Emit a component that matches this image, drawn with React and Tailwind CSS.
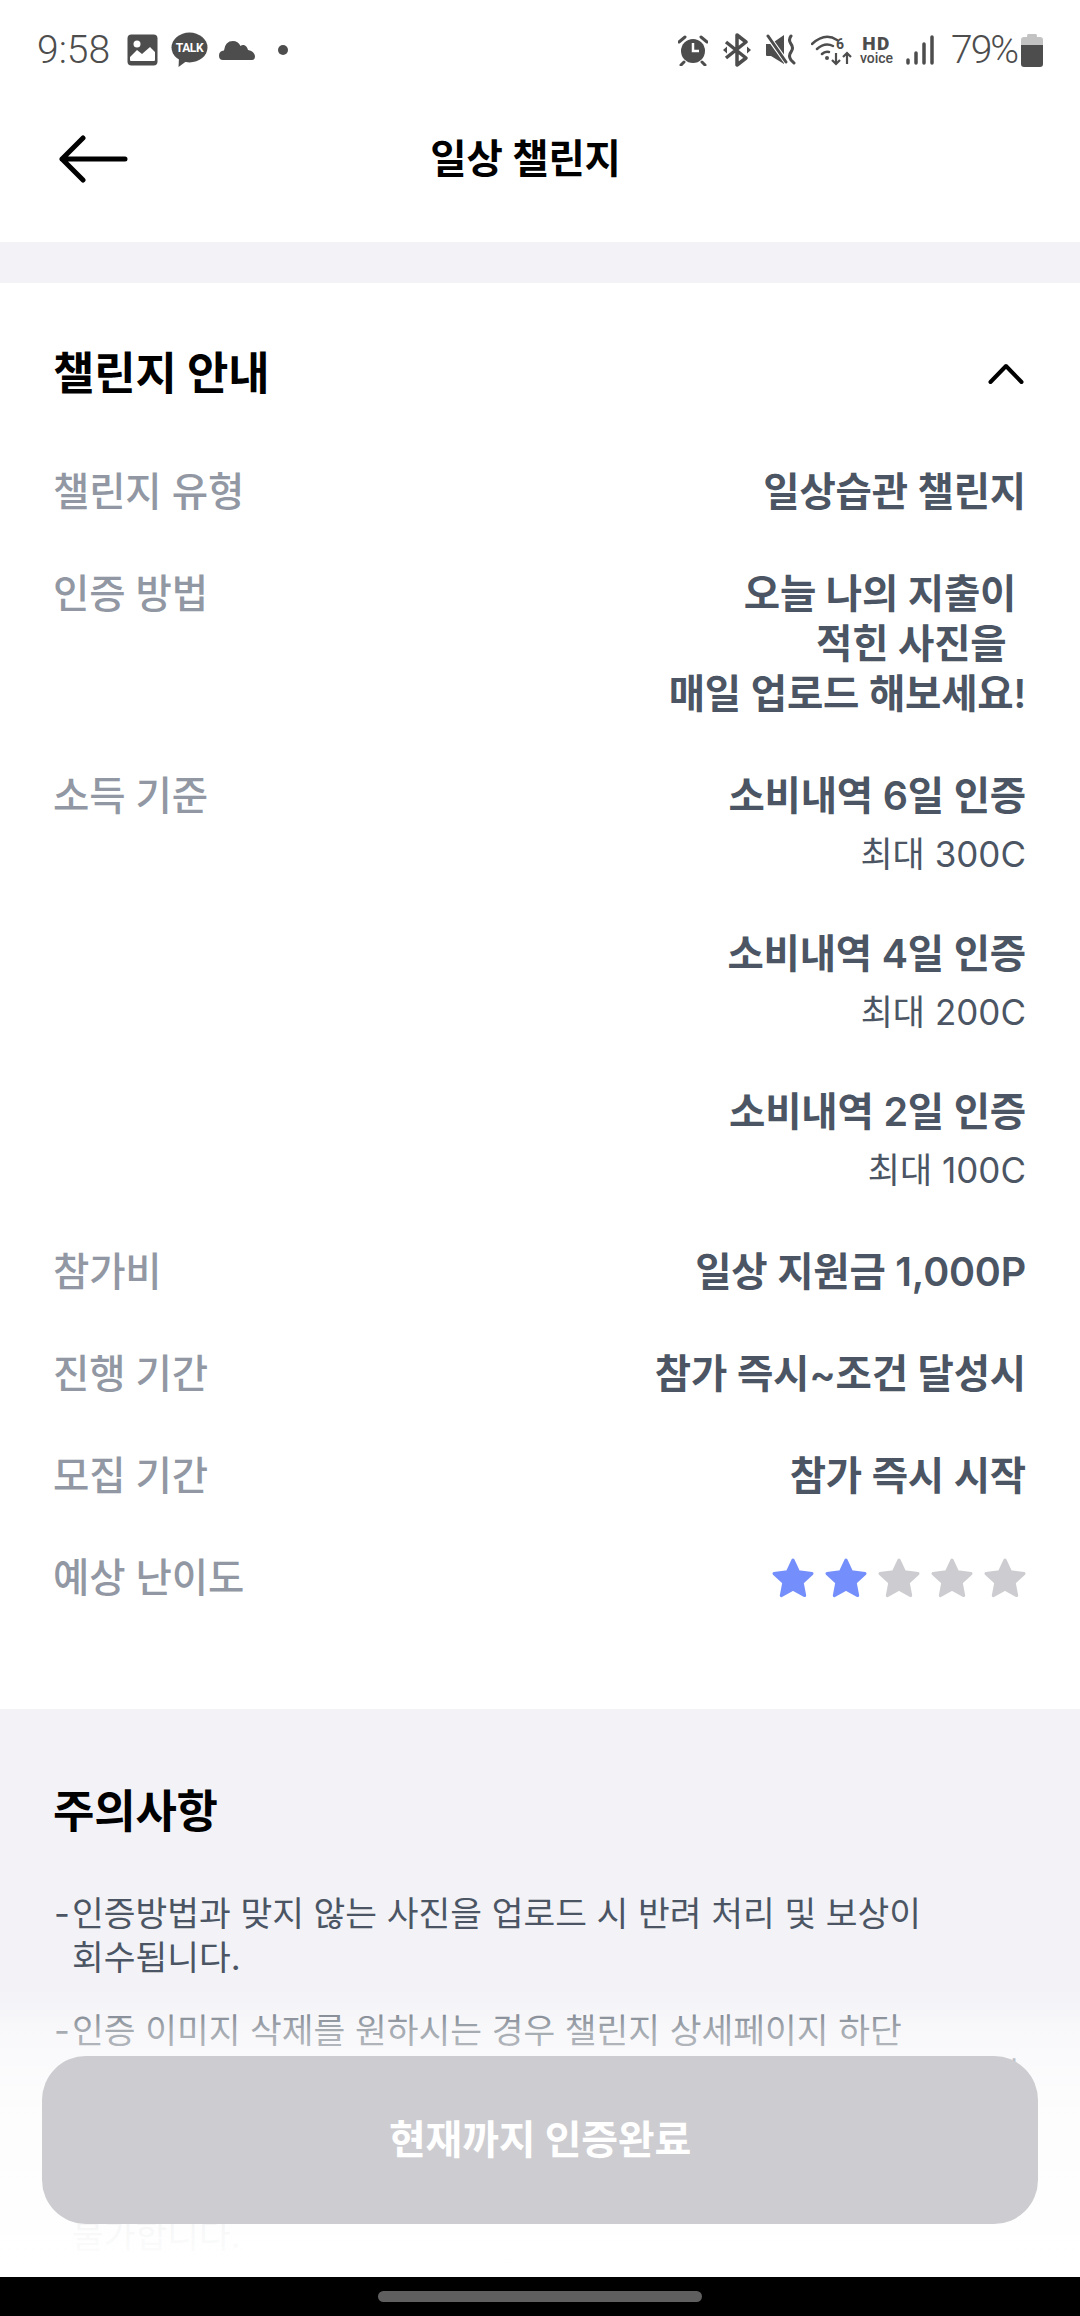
import React from "react";

const FONT = { fontFamily: 'Inter, "Noto Sans CJK KR", sans-serif' };

function Star({ on }) {
  return (
    <svg width="44" height="42" viewBox="0 0 44 42">
      <path
        d="M22 3 L27.6 14.8 L41 16.6 L31.2 25.6 L33.7 38.6 L22 32.3 L10.3 38.6 L12.8 25.6 L3 16.6 L16.4 14.8 Z"
        fill={on ? "#748FFC" : "#CDCDD1"}
        stroke={on ? "#748FFC" : "#CDCDD1"}
        strokeWidth="3"
        strokeLinejoin="round"
      />
    </svg>
  );
}

function Row({ label, children }) {
  return (
    <div className="flex justify-between items-start">
      <div className="text-[39.5px] leading-[50px] font-medium text-[#9298A3] tracking-[-0.2px]">{label}</div>
      <div className="text-right">{children}</div>
    </div>
  );
}

function Val({ children }) {
  return <div className="text-[39.5px] leading-[50px] font-semibold text-[#4B5563] tracking-[-0.2px] whitespace-pre">{children}</div>;
}

function Reward({ main, sub }) {
  return (
    <div>
      <Val>{main}</Val>
      <div className="mt-2 text-[35px] leading-[50px] text-[#4B5563]">{sub}</div>
    </div>
  );
}

function StatusBar() {
  const c = "#4D4D4D";
  return (
    <div className="h-[74px] pt-[31px] pl-[37px] pr-[37px] flex justify-between items-start bg-white">
      <div className="flex items-center h-[38px]">
        <span className="text-[39px] leading-[38px] font-light text-[#4D4D4D] w-[90px]" style={{ fontFamily: "Roboto, sans-serif" }}>9:58</span>
        <svg width="31" height="32" viewBox="0 0 31 32">
          <rect x="0.5" y="0.5" width="30" height="31" rx="4" fill={c} />
          <circle cx="10" cy="10" r="3.5" fill="#fff" />
          <path d="M3 26 V23 L10 16 L15 20 L23 13 L28 18 V26 Q28 27 27 27 H4 Q3 27 3 26 Z" fill="#fff" />
        </svg>
        <svg className="ml-[13px]" width="37" height="36" viewBox="0 0 37 36">
          <ellipse cx="18.500" cy="15.500" rx="18" ry="15" fill={c} />
          <path d="M8 26 L7.500 35 L17 28 Z" fill={c} />
          <text x="18.500" y="20" textAnchor="middle" fontSize="12" fontWeight="700" fill="#fff" fontFamily="Roboto, sans-serif" letterSpacing="-0.4">TALK</text>
        </svg>
        <svg className="ml-[11px]" width="36" height="22" viewBox="0 0 36 22">
          <path d="M4 21 Q0 21 0 16.500 Q0 12 5 11.500 Q6 2 14 2 Q19 2 21.500 7 Q23 5.500 25 6 Q28 7 29 11 Q35 12 36 17 Q36 21 33 21 Z" fill={c} />
        </svg>
        <span className="ml-[23px] w-[10px] h-[10px] rounded-full bg-[#4D4D4D]" />
      </div>
      <div className="flex items-center h-[38px]">
        <svg width="30" height="32" viewBox="0 0 30 32">
          <circle cx="15" cy="17" r="12" fill={c} />
          <path d="M15 9 V17 H21" stroke="#fff" strokeWidth="2.500" fill="none" />
          <path d="M1 8 L7 3 M29 8 L23 3 M6 28 L3 31 M24 28 L27 31" stroke={c} strokeWidth="3" strokeLinecap="round" />
        </svg>
        <svg className="ml-[15px]" width="28" height="34" viewBox="0 0 28 34">
          <path d="M3 9 L23 25 L14 32 V2 L23 9 L3 25" stroke={c} strokeWidth="3.500" fill="none" strokeLinejoin="round" />
          <path d="M0 17 L4 13.500 V20.500 Z M28 17 L24 13.500 V20.500 Z" fill={c} />
        </svg>
        <svg className="ml-[15px]" width="30" height="32" viewBox="0 0 30 32">
          <path d="M0 10 H5 L18 1 V30 L5 22 H1 Q0 22 0 21 Z" fill={c} />
          <path d="M1 1 L21 29" stroke="#fff" strokeWidth="5" />
          <path d="M2 2 L20 28" stroke={c} strokeWidth="3" strokeLinecap="round" />
          <path d="M25 2 Q22 6 25 10 Q28 14 25 18 Q22 22 25 26 L28 29" stroke={c} strokeWidth="3" fill="none" strokeLinecap="round" />
        </svg>
        <svg className="ml-[15px]" width="41" height="32" viewBox="0 0 41 32">
          <path d="M1 10 Q14 -2 26 6 M6 15 Q14 8 22 12 M11 20 Q14 17 18 18" stroke={c} strokeWidth="2.500" fill="none" strokeLinecap="round" />
          <circle cx="16" cy="24" r="2" fill={c} />
          <text x="25" y="15" fontSize="14" fontWeight="700" fill={c} fontFamily="Roboto, sans-serif">6</text>
          <path d="M25 19 V30 M21 26 L25 30 L29 26 M36 30 V19 M32 23 L36 19 L40 23" stroke={c} strokeWidth="2.200" fill="none" />
        </svg>
        <div className="ml-[8px] w-[33px] flex flex-col items-center text-[#4D4D4D] whitespace-nowrap" style={{ fontFamily: "Roboto, sans-serif" }}>
          <span className="text-[19px] leading-[17px] font-black tracking-[1.5px]">HD</span>
          <span className="text-[14px] leading-[13px] font-medium">voice</span>
        </div>
        <svg className="ml-[13px]" width="28" height="30" viewBox="0 0 28 30">
          <path d="M2 25 V28 M10 18 V28 M18 9 V28 M26 2 V28" stroke={c} strokeWidth="3.500" strokeLinecap="round" />
        </svg>
        <span className="ml-[17px] text-[39px] leading-[38px] font-light text-[#4D4D4D] tracking-[-2px] w-[70px]" style={{ fontFamily: "Roboto, sans-serif" }}>79%</span>
        <svg width="22" height="33" viewBox="0 0 22 33">
          <path d="M7 0 H15 Q16 0 16 3 H19 Q22 3 22 6 V12 H0 V6 Q0 3 3 3 H6 Q6 0 7 0 Z" fill="#C2C2C2" />
          <path d="M0 11 H22 V30 Q22 33 19 33 H3 Q0 33 0 30 Z" fill={c} />
        </svg>
      </div>
    </div>
  );
}

export default function App() {
  return (
    <div className="relative w-[1080px] h-[2316px] overflow-hidden flex flex-col bg-white" style={FONT}>
      <StatusBar />
      <header className="relative h-[168px] shrink-0 bg-white flex items-center justify-center pr-[29px]">
        <svg className="absolute left-[59px] top-[60px]" width="72" height="52" viewBox="0 0 72 52">
          <path d="M24 4 L3 25 L24 46 M3 25 H66" stroke="#000" strokeWidth="5" fill="none" strokeLinecap="round" strokeLinejoin="round" />
        </svg>
        <h1 className="text-[39.5px] leading-[50px] font-semibold text-black tracking-[-0.2px] mt-[2px]">일상 챌린지</h1>
      </header>
      <div className="flex-1 overflow-hidden bg-[#F2F2F7] pt-[41px]">
        <section className="bg-white h-[1426px] px-[54px] pt-[64px]">
          <div className="flex justify-between items-center h-[54px]">
            <h2 className="text-[45px] leading-[54px] font-bold text-black tracking-[-0.2px] -ml-[1px]">챌린지 안내</h2>
            <svg className="mr-[1px]" width="38" height="24" viewBox="0 0 38 24">
              <path d="M3.500 20 L19 4 L34.500 20" stroke="#000" strokeWidth="4" fill="none" strokeLinecap="round" strokeLinejoin="round" />
            </svg>
          </div>
          <div className="mt-[66px] flex flex-col gap-[52px] -ml-[1px]">
            <Row label="챌린지 유형"><Val>일상습관 챌린지</Val></Row>
            <Row label="인증 방법">
              <Val>{"오늘 나의 지출이 \n적힌 사진을  \n매일 업로드 해보세요!"}</Val>
            </Row>
            <Row label="소득 기준">
              <div className="flex flex-col gap-[50px]">
                <Reward main="소비내역 6일 인증" sub="최대 300C" />
                <Reward main="소비내역 4일 인증" sub="최대 200C" />
                <Reward main="소비내역 2일 인증" sub="최대 100C" />
              </div>
            </Row>
            <Row label="참가비"><Val>일상 지원금 1,000P</Val></Row>
            <Row label="진행 기간"><Val>참가 즉시~조건 달성시</Val></Row>
            <Row label="모집 기간"><Val>참가 즉시 시작</Val></Row>
            <Row label="예상 난이도">
              <div className="flex gap-[9px] mt-[4px] -mr-[1px]">
                <Star on /><Star on /><Star /><Star /><Star />
              </div>
            </Row>
          </div>
        </section>
        <section className="px-[54px] pt-[76px]">
          <h2 className="text-[45px] leading-[54px] font-bold text-black tracking-[-0.2px] -ml-[1px]">주의사항</h2>
          <div className="mt-[53px] text-[34.5px] leading-[44px] text-[#4B5563] flex flex-col gap-[29px]">
            <div className="flex">
              <span className="w-[18px] shrink-0">-</span>
              <p>인증방법과 맞지 않는 사진을 업로드 시 반려 처리 및 보상이<br />회수됩니다.</p>
            </div>
            <div className="flex">
              <span className="w-[18px] shrink-0">-</span>
              <p className="whitespace-nowrap">인증 이미지 삭제를 원하시는 경우 챌린지 상세페이지 하단<br />문의하기를 통해 요청해주시기 바라며 삭제후에는 재인증이 불가해</p>
            </div>
            <div className="flex">
              <span className="w-[18px] shrink-0">-</span>
              <p className="whitespace-nowrap">챌린지 종료 후에는 인증 내역의 수정이 어려우며<br />보상 지급 이후 참여 취소 및 환불은<br />불가합니다.</p>
            </div>
          </div>
        </section>
      </div>
      <nav className="h-[39px] shrink-0 bg-black flex justify-center pt-[14px] relative z-10">
        <span className="w-[324px] h-[11px] rounded-full bg-[#5F5F5F]" />
      </nav>
      <div className="absolute left-0 right-0 top-[1985px] bottom-[39px] bg-[linear-gradient(to_bottom,rgba(255,255,255,0)_0px,rgba(255,255,255,0.5)_45px,rgba(255,255,255,0.8)_115px,rgba(255,255,255,0.97)_255px,#ffffff_292px)] px-[42px] pt-[71px]">
        <button className="w-[996px] h-[168px] rounded-[44px] bg-[#CDCDD1] text-white text-[40px] font-bold tracking-[-0.2px]">현재까지 인증완료</button>
      </div>
    </div>
  );
}
